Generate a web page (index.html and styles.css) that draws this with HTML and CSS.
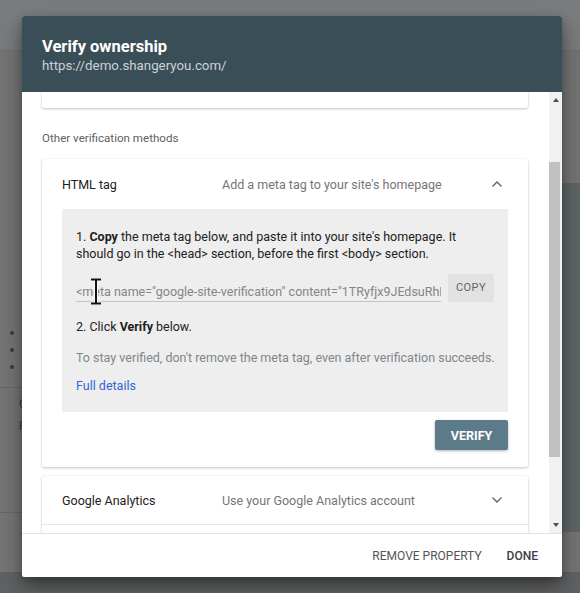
FILE: index.html
```html
<!DOCTYPE html>
<html lang="en">
  <head>
    <meta charset="UTF-8" />
    <title>Verify ownership</title>
    <link rel="stylesheet" href="styles.css">
  </head>
  <body>
    <!-- page behind the dialog, dimmed by the overlay -->
    <div class="page">
      <div class="page-top"></div>
      <div class="page-main">
        <div class="page-left">
          <div class="bullets">
            <span class="dot"></span>
            <span class="dot"></span>
            <span class="dot"></span>
          </div>
          <div class="page-rule"></div>
          <div class="page-letter">G</div>
          <div class="page-letter">F</div>
          <div class="page-rule low"></div>
        </div>
        <div class="page-right"></div>
      </div>
      <div class="page-bottom"></div>
    </div>

    <div class="dialog">
      <div class="dialog-header">
        <h1>Verify ownership</h1>
        <div class="site-url">https://demo.shangeryou.com/</div>
      </div>

      <div class="dialog-body">
        <div class="scroll-content">
          <div class="card card-cut"></div>

          <div class="section-label">Other verification methods</div>

          <div class="card">
            <div class="method-row">
              <div class="method-name">HTML tag</div>
              <div class="method-desc">Add a meta tag to your site's homepage</div>
              <svg class="chevron" width="12" height="8" viewBox="0 0 12 8">
                <path d="M1.5 6.5 L6 2 L10.5 6.5" fill="none" stroke="#5f6368" stroke-width="1.4" />
              </svg>
            </div>
            <div class="instructions">
              <p>1. <b>Copy</b> the meta tag below, and paste it into your site's homepage. It should go in the &lt;head&gt; section, before the first &lt;body&gt; section.</p>
              <div class="tag-row">
                <div class="tag-field">&lt;meta name="google-site-verification" content="1TRyfjx9JEdsuRhK3tYbQ" /&gt;</div>
                <button class="copy-btn">COPY</button>
                <svg class="ibeam" width="12" height="27" viewBox="0 0 12 27">
                  <path d="M1 1.5 H11 M6 1.5 V25.5 M1 25.5 H11" fill="none" stroke="#fff" stroke-width="4" />
                  <path d="M1 1.5 H11 M6 1.5 V25.5 M1 25.5 H11" fill="none" stroke="#111" stroke-width="2" />
                </svg>
              </div>
              <p>2. Click <b>Verify</b> below.</p>
              <p class="hint">To stay verified, don't remove the meta tag, even after verification succeeds.</p>
              <a class="details" href="#">Full details</a>
            </div>
            <div class="card-actions">
              <button class="verify-btn">VERIFY</button>
            </div>
          </div>

          <div class="card">
            <div class="method-row compact">
              <div class="method-name">Google Analytics</div>
              <div class="method-desc">Use your Google Analytics account</div>
              <svg class="chevron" width="12" height="8" viewBox="0 0 12 8">
                <path d="M1.5 1.5 L6 6 L10.5 1.5" fill="none" stroke="#5f6368" stroke-width="1.4" />
              </svg>
            </div>
            <div class="method-row next"></div>
          </div>
        </div>

        <div class="scrollbar">
          <div class="sb-arrow up"></div>
          <div class="sb-track">
            <div class="sb-thumb"></div>
          </div>
          <div class="sb-arrow down"></div>
        </div>
      </div>

      <div class="dialog-footer">
        <button class="text-btn">REMOVE PROPERTY</button>
        <button class="text-btn done">DONE</button>
      </div>
    </div>
  </body>
</html>
```

FILE: styles.css
```css
html,
body {
  margin: 0;
  height: 100%;
}
body {
  font-family: Roboto, "Noto Sans", Arial, sans-serif;
  background-color: #747474;
  overflow: hidden;
  position: relative;
}

/* dimmed page */
.page {
  height: 100%;
  display: flex;
  flex-direction: column;
}
.page-top {
  height: 50px;
  background: #7a7b7c;
  border-bottom: 1px solid #6e6e6e;
}
.page-main {
  flex: 1;
  display: flex;
  justify-content: space-between;
}
.page-left {
  width: 22px;
  padding-top: 280px;
}
.bullets {
  display: flex;
  flex-direction: column;
  gap: 13px;
  padding-left: 10px;
}
.dot {
  width: 4px;
  height: 4px;
  border-radius: 50%;
  background: #3a3a3a;
}
.page-rule {
  border-top: 1px solid #666;
  margin-top: 18px;
}
.page-rule.low {
  margin-top: 80px;
}
.page-letter {
  color: #3a3a3a;
  font-size: 12px;
  padding-left: 19px;
  margin-top: 10px;
  line-height: 12px;
}
.page-right {
  width: 18px;
  margin-top: 132px;
  margin-bottom: 40px;
  background: #5e6566;
}
.page-bottom {
  height: 21px;
  background: #5f6162;
}

/* dialog */
.dialog {
  position: absolute;
  left: 22px;
  top: 16px;
  width: 540px;
  height: 561px;
  background: white;
  border-radius: 2px;
  box-shadow: 0 10px 22px rgba(0, 0, 0, 0.35), 0 4px 8px rgba(0, 0, 0, 0.2);
  display: flex;
  flex-direction: column;
  overflow: hidden;
}
.dialog-header {
  height: 76px;
  box-sizing: border-box;
  background: #3a4e57;
  padding: 21px 20px 0;
}
.dialog-header h1 {
  margin: 0;
  font-size: 16.5px;
  font-weight: 700;
  line-height: 20px;
  color: #fff;
}
.site-url {
  font-size: 13.3px;
  line-height: 18px;
  color: #c9d3d8;
  margin-top: 0;
}

.dialog-body {
  flex: 1;
  display: flex;
  min-height: 0;
}
.scroll-content {
  flex: 1;
  overflow: hidden;
  padding: 0 21px 0 20px;
}

.card {
  background: white;
  border-radius: 2px;
  box-shadow: 0 1px 3px rgba(0, 0, 0, 0.22), 0 0 1px rgba(0, 0, 0, 0.12);
  margin-bottom: 9px;
}
.card-cut {
  height: 16px;
  border-radius: 0 0 2px 2px;
}
.section-label {
  font-size: 11.6px;
  color: #616161;
  line-height: 16px;
  margin: 22px 0 13px;
}

.method-row {
  display: flex;
  align-items: center;
  height: 50px;
  padding: 0 25px 0 20px;
  font-size: 12.5px;
}
.method-row.compact {
  height: 48px;
}
.method-name {
  width: 160px;
  color: #212121;
}
.method-desc {
  flex: 1;
  color: #757575;
}
.method-row.next {
  height: 30px;
  border-top: 1px solid #e8e8e8;
}

.instructions {
  background: #eeeeee;
  margin: 0 20px;
  padding: 19px 12px 18px 14px;
  font-size: 12.5px;
  line-height: 17px;
  color: #212121;
}
.instructions p {
  margin: 0;
}
.instructions b {
  font-weight: 700;
}
.tag-row {
  display: flex;
  align-items: flex-end;
  gap: 7px;
  margin: 12px 2px 16px 0;
  position: relative;
}
.tag-field {
  flex: 1;
  min-width: 0;
  white-space: nowrap;
  overflow: hidden;
  color: #858585;
  border-bottom: 1px solid #c4c4c4;
  padding-bottom: 1px;
  line-height: 17px;
}
.copy-btn {
  flex: none;
  width: 46px;
  height: 28px;
  border: none;
  border-radius: 2px;
  background: #e2e2e2;
  color: #5f6368;
  font-family: inherit;
  font-size: 11px;
  letter-spacing: 0.4px;
  padding: 0 0 2px;
}
.ibeam {
  position: absolute;
  left: 14px;
  top: 4px;
}
.hint {
  color: #80868b;
  white-space: nowrap;
  margin-top: 14px !important;
}
.details {
  display: inline-block;
  margin-top: 11px;
  color: #3367d6;
  text-decoration: none;
}

.card-actions {
  display: flex;
  justify-content: flex-end;
  padding: 8px 20px 17px;
}
.verify-btn {
  width: 73px;
  height: 30px;
  border: none;
  border-radius: 2px;
  background: #5a7b87;
  color: white;
  font-family: inherit;
  font-size: 12.5px;
  font-weight: 700;
  box-shadow: 0 1px 3px rgba(0, 0, 0, 0.3);
}

/* fake scrollbar */
.scrollbar {
  width: 13px;
  background: #f1f1f1;
  display: flex;
  flex-direction: column;
}
.sb-arrow {
  height: 16px;
  display: flex;
  justify-content: center;
  align-items: center;
}
.sb-arrow::before {
  content: "";
  border-left: 3.5px solid transparent;
  border-right: 3.5px solid transparent;
}
.sb-arrow.up::before {
  border-bottom: 4px solid #505050;
}
.sb-arrow.down::before {
  border-top: 4px solid #505050;
}
.sb-track {
  flex: 1;
  padding-top: 54px;
}
.sb-thumb {
  height: 295px;
  background: #c1c1c1;
  margin-right: 2px;
}

.dialog-footer {
  height: 44px;
  box-sizing: border-box;
  border-top: 1px solid #e3e3e3;
  display: flex;
  justify-content: flex-end;
  align-items: center;
  gap: 9px;
  padding: 0 16px 0 0;
}
.text-btn {
  border: none;
  background: none;
  font-family: inherit;
  font-size: 12px;
  font-weight: 500;
  color: #5f6368;
  padding: 0 8px;
}
.text-btn:first-child {
  font-weight: 400;
  color: #555;
}
.text-btn.done {
  color: #3c4043;
}
```
